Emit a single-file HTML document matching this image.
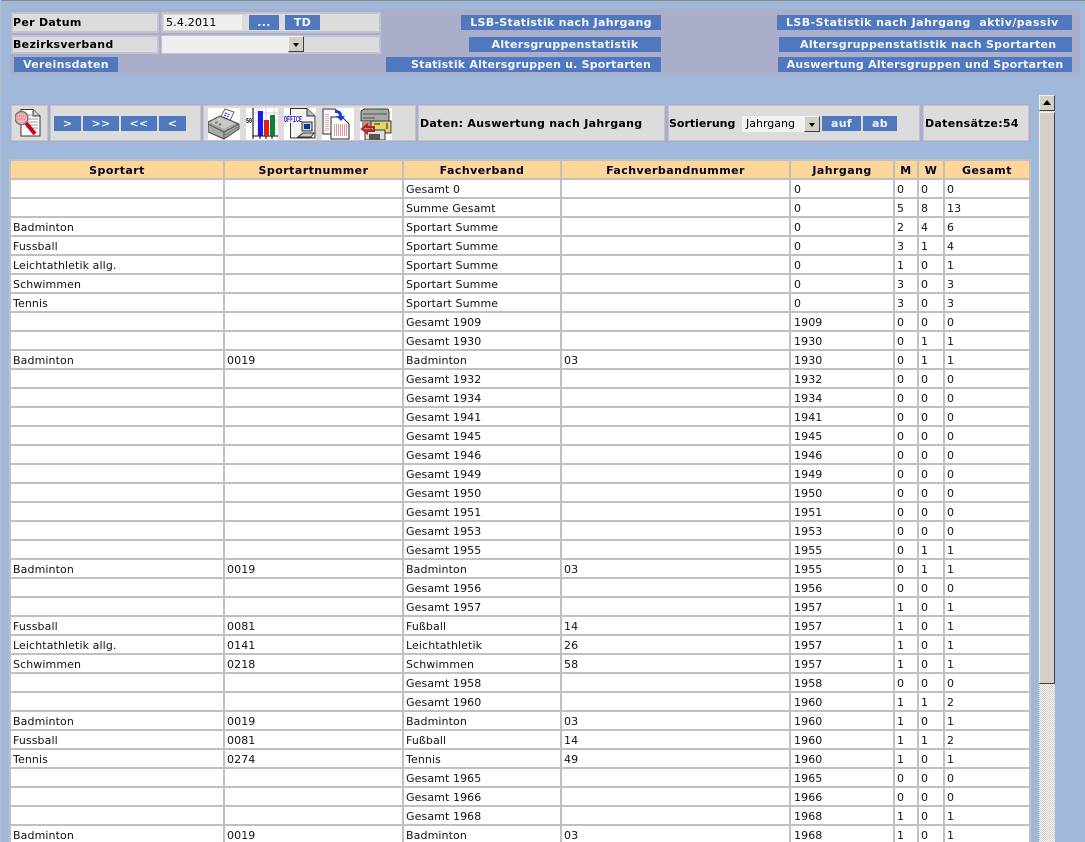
<!DOCTYPE html>
<html lang="de"><head><meta charset="utf-8"><title>Auswertung nach Jahrgang</title>
<style>
html,body{margin:0;padding:0;width:1085px;height:842px;overflow:hidden;background:#a0b9db}
body{position:relative;font:11px "DejaVu Sans","Liberation Sans",sans-serif;color:#000}
.a{position:absolute;box-sizing:border-box}
.panel{background:#abaecb}
.c{background:#dcdcdc;border:2px solid #c2c2d0;font-weight:bold;color:#000;white-space:nowrap;letter-spacing:.3px}
.tb{background:#dcdcdc;border:1px solid #c4c4cc}
.b{background:#4f78bf;color:#f4f6fb;font-weight:bold;text-align:center;height:15px;line-height:15px;white-space:nowrap;overflow:hidden;letter-spacing:.3px}
.ar{width:16px;background:#d4d0c8;border:1px solid;border-color:#f4f2ee #404040 #404040 #f4f2ee}
.ar:after{content:"";position:absolute;left:4px;top:6px;border:3px solid transparent;border-top:4px solid #000;border-bottom:0}
svg{position:absolute;display:block}
table{position:absolute;left:9px;top:159px;width:1022px;table-layout:fixed;border-collapse:separate;border-spacing:2px;background:#c0c0c0}
td,th{height:17px;padding:2px 0 0 2px;overflow:hidden;white-space:nowrap;box-sizing:border-box;line-height:15px}
td{background:#fff;color:#111;letter-spacing:.1px}
td:nth-child(5){padding-left:3px}
th{background:#ffd699;color:#000020;padding:2px 0 0;text-align:center;font-weight:bold;letter-spacing:.45px}
</style></head><body>
<div class="a" style="left:0;top:0;width:1085px;height:1px;background:#888"></div>
<div class="a" style="left:0;top:0;width:1px;height:842px;background:#b5bfd0"></div>

<div class="a panel" style="left:10px;top:9px;width:1070px;height:66px"></div>
<div class="a c" style="left:11px;top:12px;width:148px;height:21px;line-height:18px;padding-left:0">Per Datum</div>
<div class="a c" style="left:161px;top:12px;width:220px;height:21px"></div>
<div class="a" style="left:163px;top:14px;width:80px;height:17px;background:#efefef;border:1px solid #ddd8c8;line-height:15px;padding-left:2px;letter-spacing:.2px">5.4.2011</div>
<div class="a b" style="left:249px;top:15px;width:30px">...</div>
<div class="a b" style="left:285px;top:15px;width:35px">TD</div>
<div class="a c" style="left:11px;top:35px;width:148px;height:19px;line-height:15px;padding-left:0">Bezirksverband</div>
<div class="a c" style="left:161px;top:35px;width:220px;height:19px"></div>
<div class="a" style="left:162px;top:36px;width:126px;height:17px;background:#efefef"></div>
<div class="a ar" style="left:288px;top:36px;height:16px"></div>
<div class="a b" style="left:14px;top:57px;width:104px">Vereinsdaten</div>

<div class="a b" style="left:461px;top:15px;width:200px">LSB-Statistik nach Jahrgang</div>
<div class="a b" style="left:469px;top:37px;width:192px">Altersgruppenstatistik</div>
<div class="a b" style="left:386px;top:57px;width:275px;text-align:left;padding-left:25px;letter-spacing:.2px">Statistik Altersgruppen u. Sportarten</div>
<div class="a b" style="left:777px;top:15px;width:295px;white-space:pre;text-align:left;padding-left:9px;letter-spacing:.42px">LSB-Statistik nach Jahrgang  aktiv/passiv</div>
<div class="a b" style="left:779px;top:37px;width:293px;text-align:left;padding-left:21px">Altersgruppenstatistik nach Sportarten</div>
<div class="a b" style="left:778px;top:57px;width:294px;letter-spacing:.27px">Auswertung Altersgruppen und Sportarten</div>

<div class="a panel" style="left:10px;top:104px;width:1021px;height:38px"></div>
<div class="a tb" style="left:11px;top:105px;width:37px;height:36px"></div>
<div class="a tb" style="left:50px;top:105px;width:151px;height:36px"></div>
<div class="a tb" style="left:203px;top:105px;width:213px;height:36px"></div>
<div class="a tb c" style="left:418px;top:105px;width:247px;height:36px;line-height:36px;padding-left:1px;border:1px solid #c4c4cc">Daten: Auswertung nach Jahrgang</div>
<div class="a tb c" style="left:668px;top:105px;width:252px;height:36px;line-height:36px;padding-left:0;border:1px solid #c4c4cc;letter-spacing:0">Sortierung</div>
<div class="a tb c" style="left:923px;top:105px;width:106px;height:36px;line-height:36px;padding-left:1px;border:1px solid #c4c4cc">Datensätze:54</div>

<div class="a b" style="left:54px;top:116px;width:27px">&gt;</div>
<div class="a b" style="left:83px;top:116px;width:36px">&gt;&gt;</div>
<div class="a b" style="left:121px;top:116px;width:36px">&lt;&lt;</div>
<div class="a b" style="left:159px;top:116px;width:27px">&lt;</div>
<div class="a" style="left:742px;top:116px;width:62px;height:16px;background:#f2f2f2;line-height:15px;padding-left:4px">Jahrgang</div>
<div class="a ar" style="left:804px;top:116px;height:16px"></div>
<div class="a b" style="left:822px;top:116px;width:39px">auf</div>
<div class="a b" style="left:863px;top:116px;width:34px">ab</div>

<!-- magnifier -->
<svg style="left:15px;top:109px" width="27" height="28" viewBox="0 0 27 28">
<path d="M6 .5H18L25 7V27H6Z" fill="#fff" stroke="#333"/><path d="M18 .5V7H25" fill="#ccc" stroke="#333"/>
<path d="M13 6h5M14 10h9M14 13h9M15 16h8M17 19h6" stroke="#999"/>
<path d="M11 14L20 25" stroke="#d00018" stroke-width="4"/>
<circle cx="6.500" cy="9" r="6.500" fill="#f0b0b8" stroke="#777" stroke-width="1.500"/>
<path d="M2 7h9M1.500 10h10" stroke="#c77" stroke-dasharray="1 1"/>
</svg>
<!-- printer -->
<svg style="left:208px;top:108px" width="32" height="32" viewBox="0 0 32 32">
<rect width="32" height="32" fill="#fff"/>
<path d="M17 1L26 4L20 17L11 12Z" fill="#fff" stroke="#666"/>
<path d="M17 5l5 2M16 7l5 2M15 9l5 2M14 11l5 2" stroke="#2030e0" stroke-dasharray="2 1"/>
<path d="M0 14L12 8L31 16V21L16 31L0 24Z" fill="#a9a9a9" stroke="#444"/>
<path d="M0 16L16 24L31 16M16 24V31" fill="none" stroke="#555"/>
<path d="M2 14L12 9L27 15L16 21Z" fill="#c8c8c8"/>
<path d="M7 15l3-1" stroke="#30c040" stroke-width="2"/><path d="M11 17l2-1" stroke="#e04050" stroke-width="2"/>
<path d="M17 27L30 19" stroke="#777"/>
</svg>
<!-- chart -->
<svg style="left:246px;top:108px" width="32" height="32" viewBox="0 0 32 32">
<rect width="32" height="32" fill="#fff"/>
<path d="M7 5H32M7 13H32M12 0V28M20 0V28M28 0V28" stroke="#d8c8e0"/>
<path d="M7 0V28H32" fill="none" stroke="#000"/>
<rect x="12" y="3" width="5" height="25" fill="#1a1ae0"/><rect x="18" y="12" width="5" height="16" fill="#e01c1c"/><rect x="24" y="7" width="5" height="21" fill="#108030"/>
<text x="0" y="15" font-size="7" font-weight="bold" font-family="Liberation Mono" textLength="6" lengthAdjust="spacingAndGlyphs">50</text>
<path d="M7 28v3M14 28v3M20 28v3M26 28v3" stroke="#000"/>
</svg>
<!-- office -->
<svg style="left:284px;top:108px" width="32" height="32" viewBox="0 0 32 32">
<rect width="32" height="32" fill="#fff"/>
<path d="M6.500 .5H23L31 8V30H6.500Z" fill="#f2f2f2" stroke="#333"/><path d="M23 .5V8H31" fill="#bbb" stroke="#333"/>
<rect x="0" y="7" width="19" height="8" fill="#fff"/>
<text x="0" y="14" font-size="9" font-weight="bold" fill="#1a1ab0" font-family="Liberation Mono" textLength="18" lengthAdjust="spacingAndGlyphs">OFFICE</text>
<rect x="18" y="14" width="10" height="9" fill="#ccc" stroke="#333"/><rect x="20" y="16" width="6" height="5" fill="#0a3a90"/>
<path d="M14 29L19 25H30L27 29Z" fill="#ccc" stroke="#333"/>
</svg>
<!-- copy -->
<svg style="left:322px;top:108px" width="32" height="32" viewBox="0 0 32 32">
<rect width="32" height="32" fill="#fff"/>
<path d="M1 1H13L19 6V26H1Z" fill="#fff" stroke="#222"/>
<path d="M9 9H20L27 16V31H9Z" fill="#fff" stroke="#222"/>
<path d="M4 6v17M6 6v17" stroke="#c06060" stroke-dasharray="1 1"/>
<path d="M12 17h13M12 19h13M12 21h13M12 23h13M12 25h13M12 27h13" stroke="#c03040" stroke-dasharray="1 1"/>
<path d="M13 2C18 2 20 4 20 8H23L19 13L14 8H17C17 6 16 5 13 5Z" fill="#1a40d0"/>
</svg>
<!-- save -->
<svg style="left:360px;top:108px" width="32" height="32" viewBox="0 0 32 32">
<rect width="32" height="32" fill="#fff"/>
<path d="M1 3L4 1H28L29 4V13H1Z" fill="#a8a8a8" stroke="#333"/><path d="M3 6H27M3 10H15" stroke="#555"/>
<rect x="19" y="3" width="6" height="2" fill="#70c080"/>
<rect x="2" y="13" width="10" height="9" fill="#999"/>
<path d="M11 13H31V25H11Z" fill="#e0d860" stroke="#333"/>
<path d="M14 16h6M27 15v6" stroke="#777" stroke-width="2"/>
<path d="M5 22H25V32H5Z" fill="#ddd" stroke="#333"/><rect x="9" y="26" width="11" height="6" fill="#555"/>
<path d="M2 21L7 17V19H14V23H7V25Z" fill="none" stroke="#d01818" stroke-width="2"/>
</svg>

<!-- scrollbar -->
<div class="a" style="left:1039px;top:111px;width:16px;height:731px;background:conic-gradient(#fff 25%,#cfcbc3 0 50%,#fff 0 75%,#cfcbc3 0) 0 0/2px 2px"></div>
<div class="a" style="left:1039px;top:95px;width:16px;height:16px;background:#d4d0c8;border:1px solid;border-color:#f4f2ee #404040 #404040 #f4f2ee"></div>
<div class="a" style="left:1043px;top:100px;border:4px solid transparent;border-bottom:5px solid #000;border-top:0"></div>
<div class="a" style="left:1039px;top:112px;width:16px;height:572px;background:#d4d0c8;border:1px solid;border-color:#f4f2ee #404040 #404040 #f4f2ee"></div>

<table>
<colgroup><col style="width:212px"><col style="width:177px"><col style="width:156px"><col style="width:227px"><col style="width:102px"><col style="width:22px"><col style="width:24px"><col style="width:84px"></colgroup>
<tr><th>Sportart</th><th>Sportartnummer</th><th>Fachverband</th><th>Fachverbandnummer</th><th>Jahrgang</th><th>M</th><th>W</th><th>Gesamt</th></tr>
<tr><td></td><td></td><td>Gesamt 0</td><td></td><td>0</td><td>0</td><td>0</td><td>0</td></tr>
<tr><td></td><td></td><td>Summe Gesamt</td><td></td><td>0</td><td>5</td><td>8</td><td>13</td></tr>
<tr><td>Badminton</td><td></td><td>Sportart Summe</td><td></td><td>0</td><td>2</td><td>4</td><td>6</td></tr>
<tr><td>Fussball</td><td></td><td>Sportart Summe</td><td></td><td>0</td><td>3</td><td>1</td><td>4</td></tr>
<tr><td>Leichtathletik allg.</td><td></td><td>Sportart Summe</td><td></td><td>0</td><td>1</td><td>0</td><td>1</td></tr>
<tr><td>Schwimmen</td><td></td><td>Sportart Summe</td><td></td><td>0</td><td>3</td><td>0</td><td>3</td></tr>
<tr><td>Tennis</td><td></td><td>Sportart Summe</td><td></td><td>0</td><td>3</td><td>0</td><td>3</td></tr>
<tr><td></td><td></td><td>Gesamt 1909</td><td></td><td>1909</td><td>0</td><td>0</td><td>0</td></tr>
<tr><td></td><td></td><td>Gesamt 1930</td><td></td><td>1930</td><td>0</td><td>1</td><td>1</td></tr>
<tr><td>Badminton</td><td>0019</td><td>Badminton</td><td>03</td><td>1930</td><td>0</td><td>1</td><td>1</td></tr>
<tr><td></td><td></td><td>Gesamt 1932</td><td></td><td>1932</td><td>0</td><td>0</td><td>0</td></tr>
<tr><td></td><td></td><td>Gesamt 1934</td><td></td><td>1934</td><td>0</td><td>0</td><td>0</td></tr>
<tr><td></td><td></td><td>Gesamt 1941</td><td></td><td>1941</td><td>0</td><td>0</td><td>0</td></tr>
<tr><td></td><td></td><td>Gesamt 1945</td><td></td><td>1945</td><td>0</td><td>0</td><td>0</td></tr>
<tr><td></td><td></td><td>Gesamt 1946</td><td></td><td>1946</td><td>0</td><td>0</td><td>0</td></tr>
<tr><td></td><td></td><td>Gesamt 1949</td><td></td><td>1949</td><td>0</td><td>0</td><td>0</td></tr>
<tr><td></td><td></td><td>Gesamt 1950</td><td></td><td>1950</td><td>0</td><td>0</td><td>0</td></tr>
<tr><td></td><td></td><td>Gesamt 1951</td><td></td><td>1951</td><td>0</td><td>0</td><td>0</td></tr>
<tr><td></td><td></td><td>Gesamt 1953</td><td></td><td>1953</td><td>0</td><td>0</td><td>0</td></tr>
<tr><td></td><td></td><td>Gesamt 1955</td><td></td><td>1955</td><td>0</td><td>1</td><td>1</td></tr>
<tr><td>Badminton</td><td>0019</td><td>Badminton</td><td>03</td><td>1955</td><td>0</td><td>1</td><td>1</td></tr>
<tr><td></td><td></td><td>Gesamt 1956</td><td></td><td>1956</td><td>0</td><td>0</td><td>0</td></tr>
<tr><td></td><td></td><td>Gesamt 1957</td><td></td><td>1957</td><td>1</td><td>0</td><td>1</td></tr>
<tr><td>Fussball</td><td>0081</td><td>Fußball</td><td>14</td><td>1957</td><td>1</td><td>0</td><td>1</td></tr>
<tr><td>Leichtathletik allg.</td><td>0141</td><td>Leichtathletik</td><td>26</td><td>1957</td><td>1</td><td>0</td><td>1</td></tr>
<tr><td>Schwimmen</td><td>0218</td><td>Schwimmen</td><td>58</td><td>1957</td><td>1</td><td>0</td><td>1</td></tr>
<tr><td></td><td></td><td>Gesamt 1958</td><td></td><td>1958</td><td>0</td><td>0</td><td>0</td></tr>
<tr><td></td><td></td><td>Gesamt 1960</td><td></td><td>1960</td><td>1</td><td>1</td><td>2</td></tr>
<tr><td>Badminton</td><td>0019</td><td>Badminton</td><td>03</td><td>1960</td><td>1</td><td>0</td><td>1</td></tr>
<tr><td>Fussball</td><td>0081</td><td>Fußball</td><td>14</td><td>1960</td><td>1</td><td>1</td><td>2</td></tr>
<tr><td>Tennis</td><td>0274</td><td>Tennis</td><td>49</td><td>1960</td><td>1</td><td>0</td><td>1</td></tr>
<tr><td></td><td></td><td>Gesamt 1965</td><td></td><td>1965</td><td>0</td><td>0</td><td>0</td></tr>
<tr><td></td><td></td><td>Gesamt 1966</td><td></td><td>1966</td><td>0</td><td>0</td><td>0</td></tr>
<tr><td></td><td></td><td>Gesamt 1968</td><td></td><td>1968</td><td>1</td><td>0</td><td>1</td></tr>
<tr><td>Badminton</td><td>0019</td><td>Badminton</td><td>03</td><td>1968</td><td>1</td><td>0</td><td>1</td></tr>
</table>
</body></html>
